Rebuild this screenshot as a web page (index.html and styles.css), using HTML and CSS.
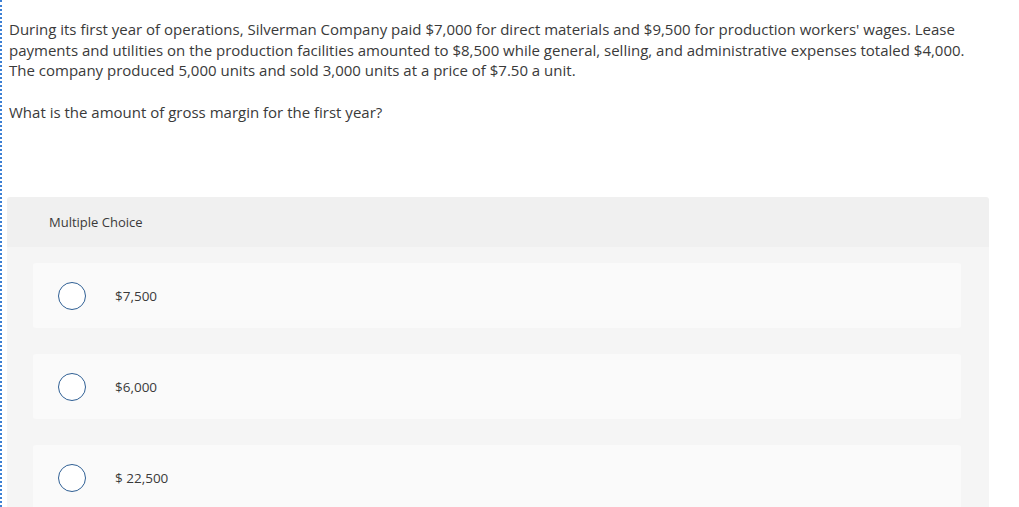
FILE: index.html
```html
<!DOCTYPE html>
<html>
<head>
<meta charset="utf-8">
<link rel="stylesheet" href="styles.css">
</head>
<body>
<div class="page">
  <div class="question">
    <p class="para">During its first year of operations, Silverman Company paid $7,000 for direct materials and $9,500 for production workers' wages. Lease payments and utilities on the production facilities amounted to $8,500 while general, selling, and administrative expenses totaled $4,000. The company produced 5,000 units and sold 3,000 units at a price of $7.50 a unit.</p>
    <p class="para">What is the amount of gross margin for the first year?</p>
  </div>
  <div class="mc">
    <div class="mc-head">Multiple Choice</div>
    <div class="mc-body">
      <div class="opt"><span class="radio"></span><span class="opt-text">$7,500</span></div>
      <div class="opt"><span class="radio"></span><span class="opt-text">$6,000</span></div>
      <div class="opt"><span class="radio"></span><span class="opt-text">$ 22,500</span></div>
    </div>
  </div>
</div>
</body>
</html>
```
FILE: styles.css
```css
html, body {
  margin: 0;
  padding: 0;
  background: #fff;
}
body {
  font-family: "Open Sans", "Lato", sans-serif;
  color: #3a3a3a;
}
.page {
  border-left: 2px dotted #3b7fd4;
  height: 507px;
  overflow: hidden;
  padding-left: 5px;
  box-sizing: border-box;
}
.question {
  padding: 19px 0 0 2px;
  width: 975px;
}
.para {
  margin: 0 0 21px 0;
  font-size: 15px;
  line-height: 20.5px;
}
.mc {
  margin-top: 75px;
  width: 982px;
}
.mc-head {
  background: #f0f0f0;
  height: 50px;
  border-radius: 3px 3px 0 0;
  font-size: 13px;
  line-height: 50px;
  padding-left: 42px;
}
.mc-body {
  background: #f5f5f5;
  padding: 16px 28px 40px 26px;
  display: flex;
  flex-direction: column;
  gap: 26px;
}
.opt {
  background: #fafafa;
  height: 65px;
  border-radius: 3px;
  display: flex;
  align-items: center;
  padding-left: 25px;
}
.radio {
  width: 26px;
  height: 26px;
  border: 1.3px solid #2f5f94;
  border-radius: 50%;
  background: #fff;
  flex: none;
}
.opt-text {
  margin-left: 29px;
  font-size: 13.5px;
}
```
